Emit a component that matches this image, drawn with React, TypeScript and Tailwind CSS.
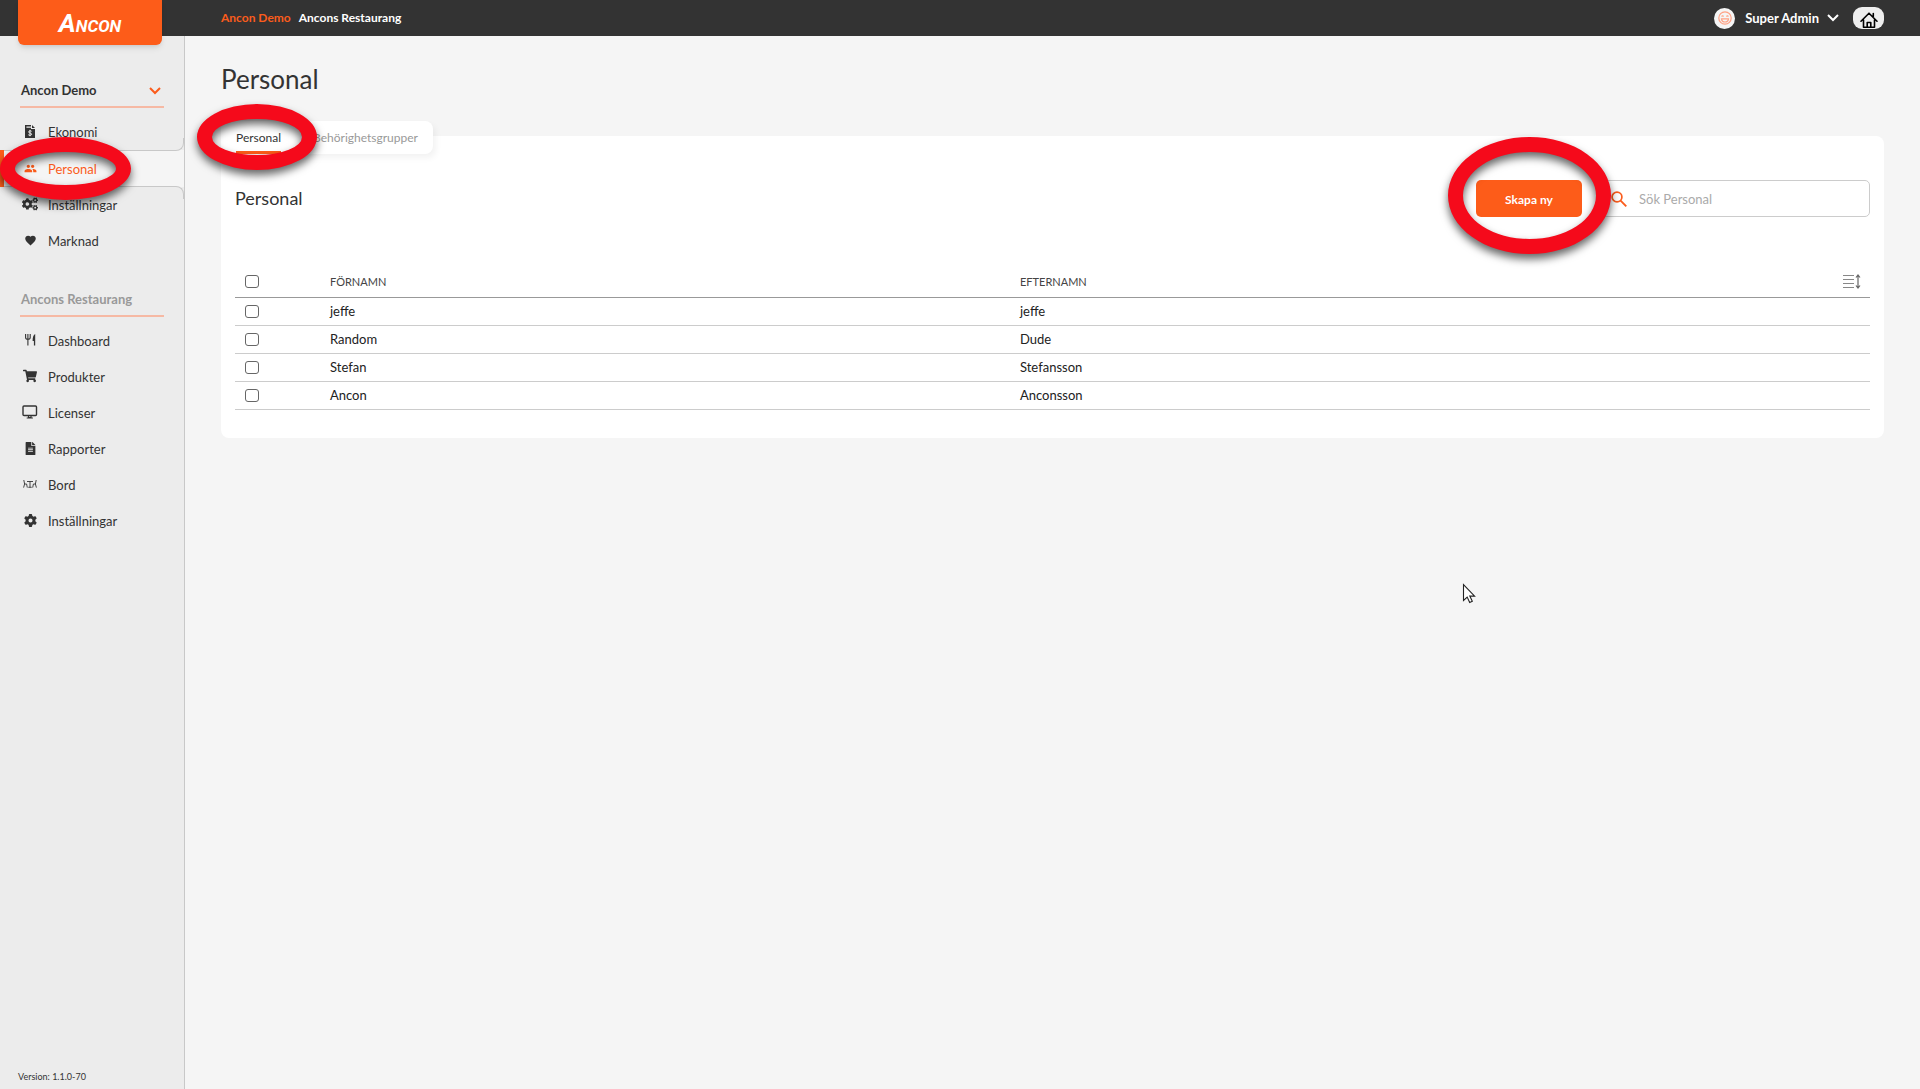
import type { ReactNode } from "react";
import { FaCogs, FaFileAlt, FaShoppingCart } from "react-icons/fa";
import { FaGear } from "react-icons/fa6";
import { IoMdHeart } from "react-icons/io";
import { MdPeople } from "react-icons/md";

function InvoiceIcon() {
  return (
    <svg width="10" height="13" viewBox="0 0 10 13" fill="currentColor">
      <path d="M0 0h6v1.6H1.4v1.2H6V4h4v9H0zM7 0l3 3H7z" />
      <path d="M6.6 6.3C6 5.6 3.6 5.6 3.6 7S6.6 7.7 6.6 9.2 3.8 10.6 3.3 9.700M5 4.800v6.400" fill="none" stroke="#ececec" strokeWidth="1" />
    </svg>
  );
}

function CutleryIcon() {
  return (
    <svg width="11" height="12" viewBox="0 0 11 12" fill="none" stroke="currentColor">
      <path d="M.6 0v3.5C.6 4.7 1.4 5.3 2.9 5.3s2.3-.6 2.3-1.8V0M2.9 0v11.5" strokeWidth="1.1" />
      <path d="M10.2 0v11.5H8.9V7H7.600C7.600 3.500 8.300.7 10.200 0z" fill="currentColor" stroke="none" />
    </svg>
  );
}

function MonitorIcon() {
  return (
    <svg width="16" height="14" viewBox="0 0 16 14" fill="none" stroke="currentColor" className="shrink-0">
      <rect x="1" y="1" width="13.500" height="9.500" rx="1" strokeWidth="1.400" />
      <path d="M6.500 10.500h2.500v2h-2.500zM4.700 13h6.200" strokeWidth="1.200" />
    </svg>
  );
}

function TableIcon() {
  return (
    <svg width="14" height="8" viewBox="0 0 14 8" fill="none" stroke="currentColor" strokeWidth=".9">
      <path d="M.8 0l.8 4h2l.7 3.600M1.600 4L.6 7.600M13.200 0l-.8 4h-2l-.7 3.600M12.400 4l1 3.600M4 1.500h6M7 1.500v5.600M5.300 7.300h3.400" />
    </svg>
  );
}

function SmileIcon() {
  return (
    <svg width="14" height="14" viewBox="0 0 14 14" fill="none" stroke="#ffa184" strokeWidth="1.200">
      <circle cx="7" cy="7" r="6.200" />
      <path d="M3.500 7.800h7C10.200 10 9 11 7 11S3.800 10 3.500 7.800zM3.700 5.600c.3-1.100 1.500-1.100 1.800 0M8.500 5.600c.3-1.100 1.500-1.100 1.800 0" />
    </svg>
  );
}

function HomeIcon() {
  return (
    <svg width="18" height="16" viewBox="0 0 18 16" fill="none" stroke="#000" strokeWidth="1.600" strokeLinecap="round" strokeLinejoin="round">
      <path d="M1 9.200L9 1.200l8 8M3.500 8v7.200h11V8M13.300 4.500V1.500M7.200 15v-4.500h3.600V15" />
    </svg>
  );
}

function SearchIcon() {
  return (
    <svg width="16" height="16" viewBox="0 0 16 16" fill="none" stroke="currentColor" className="shrink-0" aria-hidden="true">
      <circle cx="6" cy="6" r="4.900" strokeWidth="1.700" />
      <path d="M9.600 9.600L15.300 15.300" strokeWidth="1.900" />
    </svg>
  );
}

function RowHeightIcon() {
  return (
    <svg width="18" height="15" viewBox="0 0 18 15" fill="none" stroke="#888">
      <path d="M0 1.500h11M0 5.500h11M0 9.500h11M0 13.500h11" />
      <path d="M15 1.500v12M13 3.500l2-2.500 2 2.500M13 11.500l2 2.500 2-2.500" stroke="#666" strokeWidth="1.200" />
    </svg>
  );
}

function Chevron({ className }: { className: string }) {
  return (
    <svg width="12" height="8" viewBox="0 0 12 8" fill="none" stroke="currentColor" strokeWidth="2" className={className}>
      <path d="M1 1l5 5 5-5" />
    </svg>
  );
}

function Ring({ className }: { className: string }) {
  return (
    <span
      aria-hidden="true"
      className={`pointer-events-none absolute z-20 rounded-[50%] border-[15px] border-[#f50a1b] drop-shadow-[0_5px_4px_rgba(0,0,0,0.6)] ${className}`}
    />
  );
}

type Item = { label: string; icon: ReactNode; active?: boolean };

const companyItems: Item[] = [
  { label: "Ekonomi", icon: <InvoiceIcon /> },
  { label: "Personal", icon: <MdPeople size={13} />, active: true },
  { label: "Inställningar", icon: <FaCogs size={16} /> },
  { label: "Marknad", icon: <IoMdHeart size={13} /> },
];

const restaurantItems: Item[] = [
  { label: "Dashboard", icon: <CutleryIcon /> },
  { label: "Produkter", icon: <FaShoppingCart size={14} /> },
  { label: "Licenser", icon: <MonitorIcon /> },
  { label: "Rapporter", icon: <FaFileAlt size={13} /> },
  { label: "Bord", icon: <TableIcon /> },
  { label: "Inställningar", icon: <FaGear size={13} /> },
];

const people = [
  ["jeffe", "jeffe"],
  ["Random", "Dude"],
  ["Stefan", "Stefansson"],
  ["Ancon", "Anconsson"],
];

function NavList({ items }: { items: Item[] }) {
  return (
    <ul className="mt-[6px]">
      {items.map((item) => (
        <li key={item.label} className={item.active ? "relative bg-[#f5f5f5] pt-px text-[#fb5c1c]" : ""}>
          {item.active && (
            <>
              <span className="absolute inset-x-0 -top-3 h-[13px] rounded-br-lg border-r border-b border-[#c8c8c8]" />
              <span className="absolute inset-x-0 -bottom-3 h-[13px] rounded-tr-lg border-t border-r border-[#c8c8c8] bg-[#ececec]" />
              <span className="absolute inset-y-0 left-0 w-1 bg-[#fd5c19]" />
            </>
          )}
          <a href="#" className="relative flex h-9 items-center pl-[22px] leading-5">
            <span className="mr-[10px] flex w-4 justify-center pb-[2px]">{item.icon}</span>
            {item.label}
          </a>
          {item.active && <Ring className="-top-[13px] left-0 h-[63px] w-[131px]" />}
        </li>
      ))}
    </ul>
  );
}

const checkbox = "block h-[13px] w-[14px] appearance-none rounded-[3px] border border-[#666] bg-white checked:bg-[#fd5c19]";

export default function App() {
  return (
    <div className="flex min-h-screen flex-col bg-[#f5f5f5] font-['Lato',sans-serif] text-[13px] text-[#333]">
      <header className="flex h-9 items-center bg-[#333] pr-9 font-bold text-white">
        <a href="#" aria-label="Ancon" className="relative z-10 ml-[18px] flex h-[45px] w-36 items-center justify-center self-start rounded-b-md bg-[#fd5c19] font-['Roboto',sans-serif] text-[17px] leading-none font-bold italic shadow-md">
          <span className="flex items-baseline">
            <span className="text-[26px] leading-none">A</span>NCON
          </span>
        </a>
        <nav aria-label="Plats" className="ml-[59px] flex gap-2 pb-px text-[12px]">
          <a href="#" className="text-[#fb5c1c]">Ancon Demo</a>
          <a href="#">Ancons Restaurang</a>
        </nav>
        <button className="ml-auto flex items-center">
          <span className="mr-[10px] flex size-[21px] items-center justify-center rounded-full bg-[#f5f5f5]">
            <SmileIcon />
          </span>
          <span className="pt-[2px]">Super Admin</span>
          <Chevron className="ml-2" />
        </button>
        <button aria-label="Hem" className="ml-[14px] flex h-[22px] w-[31px] items-end justify-center rounded-[9px] bg-[#eee] pb-px">
          <HomeIcon />
        </button>
      </header>

      <div className="flex flex-1">
        <aside className="flex w-[185px] shrink-0 flex-col border-r border-[#c8c8c8] bg-[#ececec] pt-9">
          <button className="mx-5 flex h-9 w-36 items-center justify-between border-b-2 border-[#f6b9a4] pt-1 pr-[3px] pl-px font-bold">
            Ancon Demo
            <Chevron className="text-[#fb5c1c]" />
          </button>
          <NavList items={companyItems} />
          <h2 className="mx-5 mt-[22px] flex h-9 w-36 items-center border-b-2 border-[#f6b9a4] pt-1 pl-px font-bold text-[#999]">
            Ancons Restaurang
          </h2>
          <NavList items={restaurantItems} />
          <p className="mt-auto pb-[5px] pl-[18px] text-[9px] leading-[14px]">Version: 1.1.0-70</p>
        </aside>

        <main className="min-w-0 flex-1 px-9 pt-[23px]">
          <h1 className="text-[26px] leading-10">Personal</h1>
          <div className="relative z-10 mt-[22px] flex h-[33px] w-fit items-stretch rounded-t-lg rounded-br-lg bg-white px-[15px] text-[12px] shadow-[3px_4px_6px_rgba(0,0,0,0.05)]">
            <button className="border-b-3 border-[#fd5c19] pt-1">Personal</button>
            <button className="ml-8 border-b-3 border-transparent pt-1 text-[#999]">Behörighetsgrupper</button>
            <Ring className="-top-[17px] -left-6 h-[66px] w-[120px]" />
          </div>

          <section className="-mt-[18px] rounded-lg bg-white px-[14px] pt-11 pb-7">
            <div className="flex h-[37px] items-center">
              <h2 className="text-[18px]">Personal</h2>
              <div className="relative ml-auto">
                <button className="h-[37px] w-[106px] rounded-[5px] bg-[#fd5c19] pt-[2px] text-[12px] font-bold text-white">Skapa ny</button>
                <Ring className="-top-[43px] -left-7 h-[117px] w-[163px]" />
              </div>
              <label className="ml-5 flex h-[37px] w-[268px] items-center rounded-[5px] border border-[#ccc] pl-2 text-[#fb5c1c]">
                <SearchIcon />
                <input type="text" aria-label="Sök Personal" placeholder="Sök Personal" className="ml-3 min-w-0 flex-1 pt-[2px] text-[#333] outline-none placeholder:text-[#aaa]" />
              </label>
            </div>

            <table className="mt-[50px] w-full table-fixed border-collapse text-left text-[#222]">
              <thead>
                <tr className="h-[30px] border-b border-[#999] text-[11px] text-[#444]">
                  <th className="w-[95px] pl-[10px]">
                    <input type="checkbox" aria-label="Markera alla" className={checkbox} />
                  </th>
                  <th className="w-[42.2%] font-normal">FÖRNAMN</th>
                  <th className="font-normal">EFTERNAMN</th>
                  <th className="w-12 pr-[9px]">
                    <button aria-label="Radhöjd" className="ml-auto block">
                      <RowHeightIcon />
                    </button>
                  </th>
                </tr>
              </thead>
              <tbody>
                {people.map(([first, last]) => (
                  <tr key={first} className="h-7 border-b border-[#ccc]">
                    <td className="pl-[10px]">
                      <input type="checkbox" aria-label={`Markera ${first} ${last}`} className={checkbox} />
                    </td>
                    <td className="pt-px">{first}</td>
                    <td colSpan={2} className="pt-px">{last}</td>
                  </tr>
                ))}
              </tbody>
            </table>
          </section>
        </main>
      </div>

      <svg className="pointer-events-none absolute top-[583px] left-[1462px]" width="14" height="21" viewBox="0 0 14 21" aria-hidden="true">
        <path d="M1.500 1.500v16l3.700-3.400 2.500 5.400 2.600-1.200-2.500-5.200h4.800z" fill="#fff" stroke="#222" strokeWidth="1.100" />
      </svg>
    </div>
  );
}
